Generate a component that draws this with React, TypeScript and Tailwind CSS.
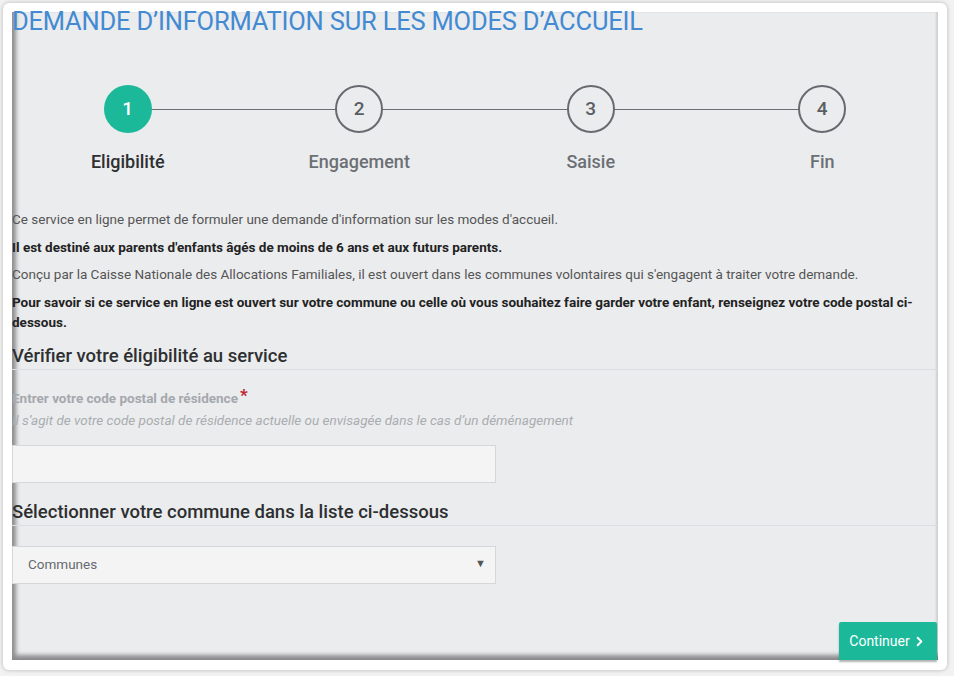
import { ChevronRight } from 'lucide-react';

const steps = [
  { n: 1, label: 'Eligibilité', active: true },
  { n: 2, label: 'Engagement', active: false },
  { n: 3, label: 'Saisie', active: false },
  { n: 4, label: 'Fin', active: false },
];

function Stepper() {
  return (
    <div className="relative mt-[48px] grid grid-cols-4">
      {/* connecting line */}
      <div className="absolute left-[12.5%] right-[12.5%] top-[24px] h-px bg-[#6b6f73]" />
      {steps.map((s) => (
        <div key={s.n} className="relative flex flex-col items-center">
          {s.active ? (
            <div className="flex h-[48px] w-[48px] items-center justify-center rounded-full bg-[#1bb99a] text-[19px] font-medium text-white">
              {s.n}
            </div>
          ) : (
            <div className="flex h-[48px] w-[48px] items-center justify-center rounded-full border-2 border-[#676b70] bg-[#ebecee] text-[19px] font-medium text-[#5a5e63]">
              {s.n}
            </div>
          )}
          <div
            className={
              'mt-[17px] text-[18px] leading-6 font-medium ' +
              (s.active ? 'text-[#2d2f31]' : 'text-[#6c7075]')
            }
          >
            {s.label}
          </div>
        </div>
      ))}
    </div>
  );
}

export default function App() {
  return (
    <div
      className="h-[676px] w-[954px] overflow-hidden bg-[#f2f2f2] p-[3px]"
      style={{ fontFamily: 'Roboto, "Liberation Sans", sans-serif' }}
    >
      <div className="h-[667px] w-[944px] rounded-[6px] bg-white px-[9px] pt-[9px] shadow-[0_0_4px_rgba(0,0,0,0.25)]">
        <div className="relative flow-root h-[648px] w-[926px] bg-[#ebecee] shadow-[inset_5px_-6px_4px_-1px_rgba(0,0,0,0.4),inset_-2px_0_2px_rgba(0,0,0,0.12)]">
          <h1 className="-mt-[7px] text-[25.5px] leading-[32px] font-normal tracking-[-0.2px] text-[#428ad2]">
            DEMANDE D’INFORMATION SUR LES MODES D’ACCUEIL
          </h1>

          <Stepper />

          <div className="mt-[35px] text-[13.5px] leading-5 text-[#555]">
            <p className="mb-[7.5px]">
              Ce service en ligne permet de formuler une demande d'information sur les modes d'accueil.
            </p>
            <p className="mb-[7.5px] font-bold text-[#222]">
              Il est destiné aux parents d'enfants âgés de moins de 6 ans et aux futurs parents.
            </p>
            <p className="mb-[7.5px]">
              Conçu par la Caisse Nationale des Allocations Familiales, il est ouvert dans les communes volontaires qui s'engagent à traiter votre demande.
            </p>
            <p className="font-bold text-[#222]">
              Pour savoir si ce service en ligne est ouvert sur votre commune ou celle où vous souhaitez faire garder votre enfant, renseignez votre code postal ci-dessous.
            </p>
          </div>

          <h2 className="mt-[12px] border-b border-[#dcdde0] pb-px text-[18.5px] leading-6 font-medium text-[#2d2f31]">
            Vérifier votre éligibilité au service
          </h2>

          <div className="mt-[20px] flex items-start text-[13.5px] leading-4 font-bold text-[#a5a8ac]">
            Entrer votre code postal de résidence
            <span className="ml-[2px] -mt-[3px] text-[17px] text-[#c0262d]">*</span>
          </div>
          <div className="mt-[6px] text-[13.5px] leading-4 italic text-[#a9acb0]">
            Il s’agit de votre code postal de résidence actuelle ou envisagée dans le cas d’un déménagement
          </div>

          <input
            type="text"
            className="mt-[17px] block h-[38px] w-[484px] border border-[#d6d7da] bg-[#f4f4f5] px-3 text-[13px] outline-none"
          />

          <h2 className="mt-[17px] border-b border-[#dcdde0] pb-px text-[18.5px] leading-6 font-medium text-[#2d2f31]">
            Sélectionner votre commune dans la liste ci-dessous
          </h2>

          <div className="mt-[20px] flex h-[38px] w-[484px] items-center justify-between border border-[#d6d7da] bg-[#f4f4f5] pr-[9px] pl-[15px] text-[13.5px] text-[#666a6f]">
            <span>Communes</span>
            <span className="text-[11px] text-[#555]">▼</span>
          </div>

          <button className="absolute right-[1px] bottom-0 flex h-[38px] w-[98px] items-center justify-center gap-[2px] rounded-t-[2px] bg-[#1bb99a] text-[14px] text-white shadow-[0_2px_2px_rgba(0,0,0,0.3)]">
            Continuer
            <ChevronRight size={15} strokeWidth={3} />
          </button>
        </div>
      </div>
    </div>
  );
}
